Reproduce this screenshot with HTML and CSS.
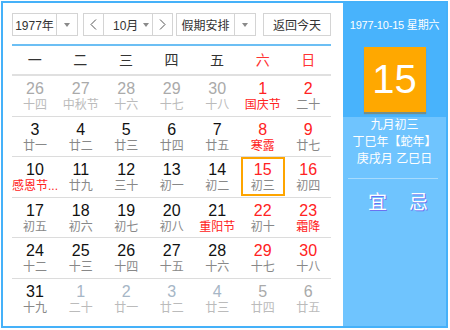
FILE: index.html
```html
<!DOCTYPE html>
<html lang="zh-CN">
<head>
  <meta charset="UTF-8" />
  <title>万年历</title>
  <link rel="stylesheet" href="styles.css">
</head>
<body>
  <div class="calendar">

    <!-- === Left: toolbar + month grid === -->
    <div class="main">
      <div class="toolbar">
        <div class="select year">
          <span class="select-text">1977年</span>
          <span class="select-arrow"><i class="caret"></i></span>
        </div>
        <div class="select month">
          <span class="step">
            <svg width="7" height="11" viewBox="0 0 7 11"><polyline points="6,0.5 1,5.5 6,10.5" fill="none" stroke="#555" stroke-width="1"/></svg>
          </span>
          <span class="month-label">10月 <i class="caret"></i></span>
          <span class="step">
            <svg width="7" height="11" viewBox="0 0 7 11"><polyline points="1,0.5 6,5.5 1,10.5" fill="none" stroke="#555" stroke-width="1"/></svg>
          </span>
        </div>
        <div class="select holiday">
          <span class="select-text">假期安排</span>
          <span class="select-arrow"><i class="caret"></i></span>
        </div>
        <div class="btn-today">返回今天</div>
      </div>

      <div class="weekdays">
        <span>一</span><span>二</span><span>三</span><span>四</span><span>五</span>
        <span class="weekend">六</span><span class="weekend">日</span>
      </div>

      <div class="days">
        <div class="day other"><b>26</b><em>十四</em></div>
        <div class="day other"><b>27</b><em>中秋节</em></div>
        <div class="day other"><b>28</b><em>十六</em></div>
        <div class="day other"><b>29</b><em>十七</em></div>
        <div class="day other"><b>30</b><em>十八</em></div>
        <div class="day weekend fest"><b>1</b><em>国庆节</em></div>
        <div class="day weekend"><b>2</b><em>二十</em></div>

        <div class="day"><b>3</b><em>廿一</em></div>
        <div class="day"><b>4</b><em>廿二</em></div>
        <div class="day"><b>5</b><em>廿三</em></div>
        <div class="day"><b>6</b><em>廿四</em></div>
        <div class="day"><b>7</b><em>廿五</em></div>
        <div class="day weekend fest"><b>8</b><em>寒露</em></div>
        <div class="day weekend"><b>9</b><em>廿七</em></div>

        <div class="day fest"><b>10</b><em>感恩节...</em></div>
        <div class="day"><b>11</b><em>廿九</em></div>
        <div class="day"><b>12</b><em>三十</em></div>
        <div class="day"><b>13</b><em>初一</em></div>
        <div class="day"><b>14</b><em>初二</em></div>
        <div class="day weekend selected"><b>15</b><em>初三</em></div>
        <div class="day weekend"><b>16</b><em>初四</em></div>

        <div class="day"><b>17</b><em>初五</em></div>
        <div class="day"><b>18</b><em>初六</em></div>
        <div class="day"><b>19</b><em>初七</em></div>
        <div class="day"><b>20</b><em>初八</em></div>
        <div class="day fest"><b>21</b><em>重阳节</em></div>
        <div class="day weekend"><b>22</b><em>初十</em></div>
        <div class="day weekend fest"><b>23</b><em>霜降</em></div>

        <div class="day"><b>24</b><em>十二</em></div>
        <div class="day"><b>25</b><em>十三</em></div>
        <div class="day"><b>26</b><em>十四</em></div>
        <div class="day"><b>27</b><em>十五</em></div>
        <div class="day"><b>28</b><em>十六</em></div>
        <div class="day weekend"><b>29</b><em>十七</em></div>
        <div class="day weekend"><b>30</b><em>十八</em></div>

        <div class="day last"><b>31</b><em>十九</em></div>
        <div class="day last other next"><b>1</b><em>二十</em></div>
        <div class="day last other next"><b>2</b><em>廿一</em></div>
        <div class="day last other next"><b>3</b><em>廿二</em></div>
        <div class="day last other next"><b>4</b><em>廿三</em></div>
        <div class="day last other"><b>5</b><em>廿四</em></div>
        <div class="day last other"><b>6</b><em>廿五</em></div>
      </div>
    </div>

    <!-- === Right: selected day panel === -->
    <div class="side">
      <div class="side-date">1977-10-15 星期六</div>
      <div class="big-day">15</div>
      <div class="lunar">
        <p>九月初三</p>
        <p>丁巳年【蛇年】</p>
        <p>庚戌月 乙巳日</p>
      </div>
      <div class="divider"></div>
      <div class="yiji">
        <span>宜</span><span>忌</span>
      </div>
    </div>

  </div>
</body>
</html>
```

FILE: styles.css
```css
body {
  margin: 0;
  font-family: "Liberation Sans", "Noto Sans CJK SC", sans-serif;
  background: #fff;
}

.calendar {
  margin: 1px;
  width: 447px;
  height: 327px;
  box-sizing: border-box;
  border: 2px solid #45b1f9;
  display: flex;
}

/* === Left side === */
.main {
  width: 340px;
  box-sizing: border-box;
  padding: 10px 12px 0 9px;
}

.toolbar {
  display: flex;
  height: 23px;
  font-size: 12px;
  color: #333;
}

.select,
.btn-today {
  display: flex;
  box-sizing: border-box;
  height: 23px;
  border: 1px solid #d4d4d4;
  background: #fff;
  align-items: center;
}

.year {
  width: 66px;
}

.month {
  width: 90px;
  margin-left: 5px;
}

.holiday {
  width: 80px;
  margin-left: 3px;
}

.btn-today {
  width: 68px;
  margin-left: 7px;
  justify-content: center;
}

.select-text {
  flex: 1;
  text-align: center;
}

.select-arrow {
  width: 20px;
  height: 100%;
  border-left: 1px solid #d4d4d4;
  display: flex;
  align-items: center;
  justify-content: center;
}

.caret {
  display: inline-block;
  width: 0;
  height: 0;
  border-top: 4px solid #8a8a8a;
  border-left: 3.5px solid transparent;
  border-right: 3.5px solid transparent;
  vertical-align: middle;
}

.step {
  width: 19px;
  height: 100%;
  display: flex;
  align-items: center;
  justify-content: center;
}

.month-label {
  flex: 1;
  height: 100%;
  border-left: 1px solid #d4d4d4;
  border-right: 1px solid #d4d4d4;
  display: flex;
  align-items: center;
  padding-left: 9px;
  gap: 5px;
}

/* === Week header === */
.weekdays {
  margin-top: 8px;
  border-top: 2px solid #6cbff4;
  border-bottom: 2px solid #e0e0e0;
  display: grid;
  grid-template-columns: repeat(7, 1fr);
  height: 28px;
  line-height: 28px;
  font-size: 14px;
  color: #333;
  text-align: center;
}

.weekdays .weekend {
  color: #f33;
}

/* === Day grid === */
.days {
  display: grid;
  grid-template-columns: repeat(7, 1fr);
}

.day {
  position: relative;
  height: 40.5px;
  box-sizing: border-box;
  border-bottom: 1px solid #dcdcdc;
  text-align: center;
  padding-top: 4px;
}

.day.last {
  border-bottom: none;
}

.day b {
  display: block;
  font-weight: normal;
  font-size: 16px;
  line-height: 18px;
  color: #111;
}

.day em {
  display: block;
  font-style: normal;
  font-size: 12px;
  line-height: 14px;
  color: #888;
  white-space: nowrap;
}

.day.weekend b {
  color: #f22;
}

.day.fest em {
  color: #f22;
}

.day.other b {
  color: #aaa;
}

.day.other.next b {
  color: #a6b6c6;
}

.day.other em {
  color: #bbb;
}

.day.selected::after {
  content: "";
  position: absolute;
  top: 0;
  left: 1px;
  right: 1px;
  bottom: 1px;
  border: 2px solid #fea500;
}

/* === Right panel === */
.side {
  flex: 1;
  background: linear-gradient(#48b3fc 0, #48b3fc 114px, #6fc4fe 114px);
  color: #fff;
  text-align: center;
  padding-top: 14px;
}

.side-date {
  font-size: 11px;
  line-height: 16px;
  letter-spacing: -0.2px;
}

.big-day {
  width: 62px;
  height: 65px;
  margin: 14px auto 0;
  background: #ffa800;
  box-shadow: 0 2px 1px rgba(170, 100, 0, 0.45);
  font-size: 40px;
  line-height: 65px;
  color: #fff;
}

.lunar {
  margin-top: 5px;
  font-size: 12px;
  line-height: 17px;
}

.lunar p {
  margin: 0;
}

.divider {
  margin: 10px 8px 0 5px;
  height: 1px;
  background: #a7dbfd;
}

.yiji {
  margin-top: 12px;
  display: flex;
  justify-content: center;
  gap: 22px;
  padding-left: 7px;
  font-size: 19px;
  line-height: 24px;
  text-shadow: 1px 1px 0 #6a72f0;
}
```
